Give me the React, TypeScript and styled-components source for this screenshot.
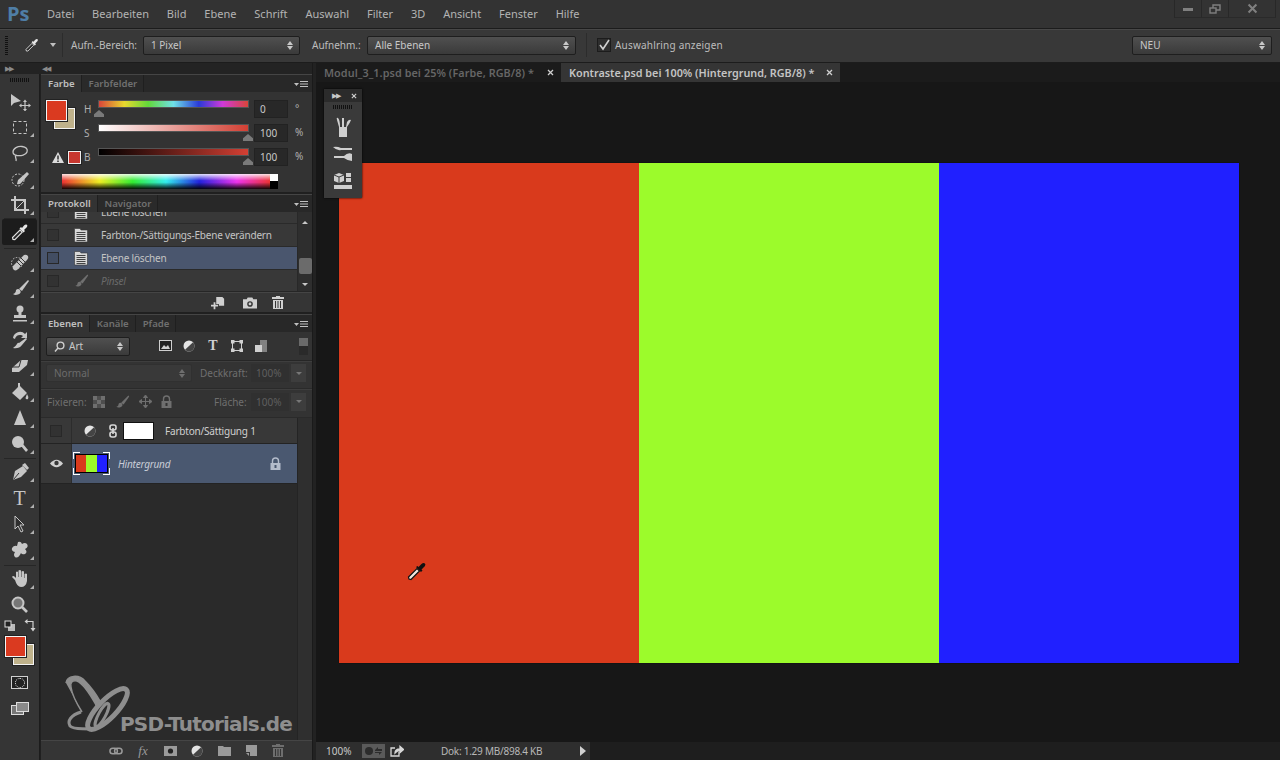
import React from 'react';
import styled, { createGlobalStyle } from 'styled-components';

const GlobalStyle = createGlobalStyle`
  html, body { margin: 0; padding: 0; background: #161616; overflow: hidden; }
  * { box-sizing: border-box; }
`;

const Shell = styled.div`
  width: 1280px;
  height: 760px;
  display: flex;
  flex-direction: column;
  overflow: hidden;
  font-family: "Noto Sans", "Liberation Sans", sans-serif;
  font-size: 10px;
  color: #c4c4c4;
  background: #161616;
`;

/* menu */
const MenuBar = styled.div`
  height: 29px;
  flex: none;
  display: flex;
  align-items: flex-start;
  background: #333333;
  border-bottom: 1px solid #1c1c1c;
`;
const Logo = styled.div`
  width: 47px;
  padding: 1px 0 0 7px;
  font: bold 20px/26px "Open Sans", sans-serif;
  color: #4f7ea6;
`;
const MenuItems = styled.div`
  display: flex;
  gap: 17.9px;
  padding-top: 6px;
  font-size: 11px;
  line-height: 15px;
  color: #b4b4b4;
`;
const WindowButtons = styled.div`
  margin-left: auto;
  margin-right: 4px;
  height: 18px;
  display: flex;
  color: #808080;
  border-left: 1px solid #282828;
`;
const WindowButton = styled.div<{ $w: number }>`
  width: ${({ $w }) => $w}px;
  height: 18px;
  display: flex;
  align-items: center;
  justify-content: center;
  border-right: 1px solid #282828;
  border-bottom: 1px solid #2a2a2a;
`;

/* options */
const OptionsBar = styled.div`
  height: 34px;
  flex: none;
  display: flex;
  align-items: center;
  padding-bottom: 2px;
  background: #383838;
  border-top: 1px solid #484848;
  border-bottom: 1px solid #1c1c1c;
  color: #bdbdbd;
`;
const Grip = styled.div`
  width: 3px;
  height: 19px;
  margin-left: 5px;
  background: repeating-linear-gradient(#111 0 1px, transparent 1px 2px);
`;
const OptionIcon = styled.div`
  width: 18px;
  margin-left: 16px;
  display: flex;
  color: #e0e0e0;
`;
const Caret = styled.div`
  margin-left: 8px;
  width: 0;
  height: 0;
  border: 3px solid transparent;
  border-top: 4px solid #c0c0c0;
  border-bottom: 0;
`;
const VSep = styled.div<{ $left: number; $right: number }>`
  width: 1px;
  height: 24px;
  margin: 0 ${({ $right }) => $right}px 0 ${({ $left }) => $left}px;
  background: #2c2c2c;
`;
const SelectBox = styled.div<{ $w: number; $h?: number; $disabled?: boolean }>`
  width: ${({ $w }) => $w}px;
  height: ${({ $h }) => $h ?? 19}px;
  flex: none;
  display: flex;
  align-items: center;
  padding: 0 6px 0 7px;
  color: ${({ $disabled }) => ($disabled ? '#6c6c6c' : '#c8c8c8')};
  background: ${({ $disabled }) => ($disabled ? '#393939' : 'linear-gradient(#505050, #3a3a3a)')};
  border: 1px solid ${({ $disabled }) => ($disabled ? '#303030' : '#1e1e1e')};
  border-radius: 2px;
`;
const SearchGlyph = styled.svg`
  margin-right: 4px;
`;
const Spinner = styled.span<{ $dim?: boolean }>`
  margin-left: auto;
  display: flex;
  flex-direction: column;
  gap: 1px;
  &::before, &::after {
    content: '';
    border: 3px solid transparent;
    border-top: 0;
    border-bottom: 4px solid ${({ $dim }) => ($dim ? '#6e6e6e' : '#c8c8c8')};
  }
  &::after {
    border-bottom: 0;
    border-top: 4px solid ${({ $dim }) => ($dim ? '#6e6e6e' : '#c8c8c8')};
  }
`;
const OptionLabel = styled.div<{ $left: number; $w: number }>`
  width: ${({ $w }) => $w}px;
  flex: none;
  margin-left: ${({ $left }) => $left}px;
  white-space: nowrap;
`;
const CheckBox = styled.div`
  width: 14px;
  height: 14px;
  margin-right: 4px;
  display: flex;
  color: #d0d0d0;
  background: #2e2e2e;
  border: 1px solid #1c1c1c;
`;
const CheckLabel = styled.div`
  letter-spacing: 0.2px;
`;
const RightSelect = styled.div`
  margin-left: auto;
  margin-right: 8px;
`;

/* body */
const Workspace = styled.div`
  flex: 1;
  min-height: 0;
  display: flex;
`;
const DockColumn = styled.div`
  width: 312px;
  flex: none;
  display: flex;
  flex-direction: column;
  background: #202020;
`;
const CollapseStrip = styled.div`
  height: 11px;
  flex: none;
  display: flex;
  align-items: center;
  justify-content: space-between;
  padding: 0 262px 0 5px;
  background: #232323;
  color: #8a8a8a;
  font-size: 7px;
  letter-spacing: -1px;
`;
const DockBody = styled.div`
  flex: 1;
  min-height: 0;
  display: flex;
  gap: 1px;
`;
const ToolColumn = styled.div`
  width: 40px;
  flex: none;
  display: flex;
  flex-direction: column;
  align-items: center;
  background: #353535;
  border-right: 1px solid #1c1c1c;
`;
const ToolGrip = styled.div`
  width: 20px;
  height: 4px;
  margin: 4px 0 6px;
  background: repeating-linear-gradient(90deg, #111 0 1px, transparent 1px 2px);
`;
const ToolButton = styled.div<{ $active?: boolean; $corner?: boolean }>`
  position: relative;
  width: 35px;
  height: 26px;
  flex: none;
  display: flex;
  align-items: center;
  justify-content: center;
  color: #c6c6c6;
  background: ${({ $active }) => ($active ? '#1c1c1c' : 'transparent')};
  border-radius: 2px;
  &::after {
    content: '';
    display: ${({ $corner }) => ($corner ? 'block' : 'none')};
    position: absolute;
    right: 3px;
    bottom: 3px;
    border: 2px solid transparent;
    border-right-color: #b0b0b0;
    border-bottom-color: #b0b0b0;
  }
`;
const TypeGlyph = styled.span`
  font: 20px "Liberation Serif", serif;
`;
const ToolSep = styled.div<{ $h: number }>`
  width: 32px;
  height: ${({ $h }) => $h}px;
  flex: none;
  border-bottom: 1px solid #262626;
`;
const SwapRow = styled.div`
  width: 32px;
  height: 14px;
  margin-bottom: 4px;
  display: flex;
  justify-content: space-between;
  align-items: center;
  color: #d0d0d0;
`;
const SwatchPair = styled.div`
  position: relative;
  width: 29px;
  height: 29px;
  flex: none;
  &::before, &::after {
    content: '';
    position: absolute;
    width: 19px;
    height: 19px;
    border: 1px solid #f4f4f4;
    outline: 1px solid #222;
  }
  &::before {
    right: 0;
    bottom: 0;
    background: #bfb28b;
  }
  &::after {
    left: 0;
    top: 0;
    background: #da3a20;
  }
`;
const MaskButton = styled.div`
  margin-top: 11px;
  width: 17px;
  height: 13px;
  display: flex;
  align-items: center;
  justify-content: center;
  background: #222;
  border: 1px solid #d0d0d0;
  &::after {
    content: '';
    width: 8px;
    height: 8px;
    border-radius: 50%;
    border: 1px dotted #eee;
  }
`;
const ScreenButton = styled.div`
  margin-top: 13px;
  color: #bbb;
  display: flex;
`;

const PanelColumn = styled.div`
  flex: 1;
  min-width: 0;
  display: flex;
  flex-direction: column;
  gap: 2px;
`;
const Panel = styled.div<{ $h?: number; $grow?: boolean }>`
  height: ${({ $h }) => ($h ? `${$h}px` : 'auto')};
  flex: ${({ $grow }) => ($grow ? '1' : 'none')};
  min-height: 0;
  display: flex;
  flex-direction: column;
  background: #333333;
  border-top: 1px solid #454545;
`;
const TabBar = styled.div`
  height: 17px;
  flex: none;
  display: flex;
  align-items: stretch;
  background: #282828;
  font-size: 9.6px;
  font-weight: 600;
`;
const Tab = styled.div<{ $active?: boolean }>`
  padding: 0 6px 0 7px;
  display: flex;
  align-items: center;
  color: ${({ $active }) => ($active ? '#c0c0c0' : '#707070')};
  background: ${({ $active }) => ($active ? '#333333' : '#2a2a2a')};
  border-right: 1px solid #1f1f1f;
`;
const PanelMenu = styled.div`
  margin: 0 4px 0 auto;
  align-self: center;
  display: flex;
  color: #c0c0c0;
`;

/* colour panel */
const ColorBody = styled.div`
  flex: 1;
  display: grid;
  grid-template-columns: 38px 1fr;
  padding: 8px 0 0 5px;
`;
const ColorLeft = styled.div`
  display: flex;
  flex-direction: column;
  justify-content: space-between;
  height: 64px;
`;
const WarningRow = styled.div`
  display: flex;
  align-items: center;
  gap: 4px;
  padding-left: 6px;
  color: #dcdcdc;
`;
const MiniSwatch = styled.div`
  width: 13px;
  height: 13px;
  background: #c8372f;
  border: 1px solid #eee;
  outline: 1px solid #222;
`;
const SliderRows = styled.div`
  display: flex;
  flex-direction: column;
  gap: 6px;
`;
const SliderRow = styled.div`
  height: 18px;
  display: flex;
  align-items: flex-start;
`;
const SliderLabel = styled.div`
  width: 15px;
  padding-top: 2px;
  line-height: 14px;
  color: #b0b0b0;
`;
const SliderWrap = styled.div`
  position: relative;
  width: 149px;
  height: 6px;
  margin-top: 1px;
`;
const SliderTrack = styled.div<{ $bg: string }>`
  height: 6px;
  background: ${({ $bg }) => $bg};
  outline: 1px solid #555;
`;
const Thumb = styled.div<{ $pos: number }>`
  position: absolute;
  top: 9px;
  left: ${({ $pos }) => $pos}%;
  margin-left: -5px;
  width: 10px;
  height: 7px;
  background: #7a7a7a;
  clip-path: polygon(50% 0, 100% 60%, 100% 100%, 0 100%, 0 60%);
`;
const ValueBox = styled.div`
  width: 34px;
  height: 18px;
  margin-left: 6px;
  padding-left: 5px;
  line-height: 17px;
  color: #c8c8c8;
  background: #282828;
  border: 1px solid #222;
`;
const Unit = styled.div`
  margin-left: 4px;
  padding-left: 3px;
  color: #b0b0b0;
  line-height: 16px;
`;
const Spectrum = styled.div`
  display: flex;
  height: 15px;
  margin: 4px 0 0 -22px;
  width: 216px;
`;
const SpectrumRamp = styled.div`
  flex: 1;
  background:
    linear-gradient(#ffffffdd, #ffffff00 45%, #00000000 55%, #000000ee),
    linear-gradient(90deg, #e33 0%, #ee2 18%, #3e3 34%, #3ee 50%, #22d 66%, #e3e 84%, #e33 100%);
`;
const SpectrumEnd = styled.div`
  width: 8px;
  background: linear-gradient(#fff 50%, #000 50%);
`;

/* history panel */
const HistoryBody = styled.div`
  flex: 1;
  min-height: 0;
  overflow: hidden;
  display: flex;
  border-bottom: 1px solid #262626;
`;
const HistoryList = styled.div`
  flex: 1;
  min-width: 0;
  display: flex;
  flex-direction: column;
  overflow: hidden;
`;
const HistoryRow = styled.div<{ $selected?: boolean; $clip?: boolean; $dim?: boolean }>`
  height: 23px;
  margin-top: ${({ $clip }) => ($clip ? -11 : 0)}px;
  flex: none;
  display: flex;
  align-items: center;
  padding-left: 6px;
  letter-spacing: -0.2px;
  color: ${({ $dim }) => ($dim ? '#6a6a6a' : '#c4c4c4')};
  font-style: ${({ $dim }) => ($dim ? 'italic' : 'normal')};
  background: ${({ $selected }) => ($selected ? '#4a566e' : '#383838')};
  border-bottom: 1px solid #2a2a2a;
`;
const RowCheck = styled.div`
  width: 12px;
  height: 12px;
  flex: none;
  background: rgba(0, 0, 0, 0.1);
  border: 1px solid #282828;
`;
const RowIcon = styled.div<{ $dim?: boolean }>`
  width: 16px;
  margin-left: 14px;
  margin-right: 12px;
  flex: none;
  display: flex;
  color: ${({ $dim }) => ($dim ? '#707070' : '#d8d8d8')};
`;
const ScrollBar = styled.div`
  width: 15px;
  flex: none;
  display: flex;
  flex-direction: column;
  align-items: center;
  padding-top: 9px;
  background: #2e2e2e;
  border-left: 1px solid #282828;
`;
const ArrowUp = styled.div`
  border: 3px solid transparent;
  border-top: 0;
  border-bottom: 3px solid #c8c8c8;
`;
const ArrowDown = styled(ArrowUp)`
  border-bottom: 0;
  border-top: 3px solid #c8c8c8;
  margin-top: 9px;
`;
const ScrollThumb = styled.div`
  width: 13px;
  height: 16px;
  margin-top: 34px;
  background: #6b6b6b;
  border-radius: 2px;
`;
const PanelFooter = styled.div<{ $dim?: boolean }>`
  height: 20px;
  flex: none;
  position: relative;
  display: flex;
  align-items: center;
  color: ${({ $dim }) => ($dim ? '#9a9a9a' : '#d0d0d0')};
  background: #353535;
  border-top: 1px solid #454545;
`;
const FooterIcon = styled.div<{ $left: number; $dim?: boolean }>`
  margin-left: ${({ $left }) => $left}px;
  display: flex;
  width: 14px;
  justify-content: center;
  color: ${({ $dim }) => ($dim ? '#6e6e6e' : 'inherit')};
`;
const FxText = styled.span`
  font: italic 13px "Liberation Serif", serif;
`;
const ResizeGrip = styled.div`
  position: absolute;
  right: 1px;
  bottom: 1px;
  width: 9px;
  height: 9px;
  background: radial-gradient(#777 35%, transparent 40%) 0 0 / 2px 2px;
  clip-path: polygon(100% 0, 100% 100%, 0 100%);
`;

/* layers panel */
const FilterRow = styled.div`
  height: 29px;
  flex: none;
  display: flex;
  align-items: center;
  padding-left: 5px;
  border-bottom: 1px solid #262626;
`;
const FilterIcons = styled.div`
  display: flex;
  margin-left: 28px;
  gap: 10px;
  color: #d0d0d0;
`;
const FilterIcon = styled.div`
  width: 14px;
  display: flex;
  justify-content: center;
`;
const FilterType = styled.span`
  font: bold 14px/12px "Liberation Serif", serif;
`;
const ToggleSwitch = styled.div`
  width: 9px;
  height: 17px;
  margin-left: 31px;
  background: linear-gradient(#6a6a6a 50%, #2a2a2a 50%);
`;
const DisabledRow = styled.div<{ $h: number; $pad: number }>`
  height: ${({ $h }) => $h}px;
  flex: none;
  display: flex;
  align-items: center;
  padding: 0 0 ${({ $pad }) => $pad}px 5px;
  color: #6f6f6f;
  border-bottom: 1px solid #2a2a2a;
  border-top: 1px solid #3e3e3e;
`;
const MutedLabel = styled.div<{ $left: number; $w: number }>`
  width: ${({ $w }) => $w}px;
  flex: none;
  margin-left: ${({ $left }) => $left}px;
  white-space: nowrap;
  color: #6f6f6f;
`;
const PercentBox = styled.div`
  width: 38px;
  height: 18px;
  padding-left: 5px;
  line-height: 18px;
  color: #5f5f5f;
  background: #303030;
`;
const Stepper = styled.div`
  width: 15px;
  height: 18px;
  margin-left: 2px;
  display: flex;
  align-items: center;
  justify-content: center;
  background: #3d3d3d;
  &::after {
    content: '';
    border: 3px solid transparent;
    border-top: 3px solid #777;
    border-bottom: 0;
  }
`;
const LockIcons = styled.div`
  display: flex;
  align-items: center;
  gap: 9px;
  margin-left: 9px;
  color: #6f6f6f;
`;
const LayersBody = styled.div`
  position: relative;
  flex: 1;
  min-height: 0;
  display: flex;
  background: #2a2a2a;
`;
const LayerList = styled.div`
  flex: 1;
  min-width: 0;
`;
const LayerRow = styled.div<{ $h: number }>`
  height: ${({ $h }) => $h}px;
  display: flex;
  background: #383838;
  border-bottom: 1px solid #232323;
`;
const EyeCell = styled.div`
  width: 31px;
  flex: none;
  display: flex;
  align-items: center;
  justify-content: center;
  color: #d0d0d0;
  border-right: 1px solid #2c2c2c;
`;
const LayerContent = styled.div<{ $selected?: boolean }>`
  flex: 1;
  display: flex;
  align-items: center;
  letter-spacing: -0.2px;
  color: ${({ $selected }) => ($selected ? '#c8ccd6' : '#d0d0d0')};
  background: ${({ $selected }) => ($selected ? '#4a5870' : 'transparent')};
`;
const AdjustIcon = styled.div`
  width: 12px;
  margin-left: 12px;
  display: flex;
  color: #d8d8d8;
`;
const LinkIcon = styled.div`
  width: 8px;
  margin-left: 13px;
  display: flex;
  color: #d8d8d8;
`;
const MaskThumb = styled.div`
  width: 31px;
  height: 18px;
  margin-left: 6px;
  background: #fff;
  border: 1px solid #111;
`;
const LayerName = styled.div<{ $left: number; $italic?: boolean }>`
  margin-left: ${({ $left }) => $left}px;
  font-style: ${({ $italic }) => ($italic ? 'italic' : 'normal')};
`;
const ImageThumb = styled.div`
  position: relative;
  width: 33px;
  height: 19px;
  margin-left: 3px;
  display: flex;
  border: 1px solid #000;
  &::before {
    content: '';
    position: absolute;
    inset: -3px;
    background:
      linear-gradient(#fff, #fff) 0 0 / 7px 1px,
      linear-gradient(#fff, #fff) 0 0 / 1px 7px,
      linear-gradient(#fff, #fff) 100% 0 / 7px 1px,
      linear-gradient(#fff, #fff) 100% 0 / 1px 7px,
      linear-gradient(#fff, #fff) 0 100% / 7px 1px,
      linear-gradient(#fff, #fff) 0 100% / 1px 7px,
      linear-gradient(#fff, #fff) 100% 100% / 7px 1px,
      linear-gradient(#fff, #fff) 100% 100% / 1px 7px;
    background-repeat: no-repeat;
  }
`;
const ThumbStripe = styled.div<{ $c: string }>`
  flex: 1;
  background: ${({ $c }) => $c};
`;
const LayerLock = styled.div`
  margin-left: auto;
  margin-right: 16px;
  display: flex;
  color: #b4bccb;
`;
const LayerScroll = styled.div`
  width: 15px;
  flex: none;
  background: #2f2f2f;
  border-left: 1px solid #242424;
`;
const Watermark = styled.div`
  position: absolute;
  left: 23px;
  bottom: 6px;
  display: flex;
  align-items: flex-end;
  color: #8e8e8e;
`;
const WatermarkText = styled.div`
  margin: 0 0 -2px -10px;
  font: bold 20px/24px "DejaVu Sans", sans-serif;
  letter-spacing: -0.8px;
  white-space: nowrap;
`;

/* document area */
const DocGutter = styled.div`
  width: 4px;
  flex: none;
  background: #222222;
  border-left: 1px solid #1a1a1a;
`;
const DocArea = styled.div`
  position: relative;
  flex: 1;
  min-width: 0;
  display: flex;
  flex-direction: column;
  background: #171717;
`;
const DocTabs = styled.div`
  height: 19px;
  flex: none;
  display: flex;
  background: #1b1b1b;
  font-size: 10.8px;
  font-weight: 600;
`;
const DocTab = styled.div<{ $active?: boolean; $w: number }>`
  width: ${({ $w }) => $w}px;
  display: flex;
  align-items: center;
  justify-content: space-between;
  padding: 0 7px 0 8px;
  white-space: nowrap;
  letter-spacing: ${({ $active }) => ($active ? 0 : 0.08)}px;
  color: ${({ $active }) => ($active ? '#c4c4c4' : '#666666')};
  background: ${({ $active }) => ($active ? '#353535' : 'transparent')};
`;
const TabClose = styled.span`
  display: flex;
  color: #cfcfcf;
`;
const Viewport = styled.div`
  flex: 1;
  min-height: 0;
  padding: 81px 0 0 23px;
  background: #171717;
`;
const Picture = styled.div`
  width: 900px;
  height: 500px;
  display: flex;
  box-shadow: 0 0 1px #000;
`;
const PictureBand = styled.div<{ $c: string; $w: number }>`
  width: ${({ $w }) => $w}px;
  background: ${({ $c }) => $c};
`;
const StatusBar = styled.div`
  height: 18px;
  flex: none;
  display: flex;
  align-items: center;
  background: #1e1e1e;
`;
const StatusGroup = styled.div`
  width: 274px;
  height: 18px;
  display: flex;
  align-items: center;
  background: #2e2e2e;
  color: #b8b8b8;
  & > * {
    flex: none;
  }
`;
const ZoomText = styled.div`
  width: 46px;
  padding-left: 10px;
  color: #c8c8c8;
`;
const StatusChip = styled.div`
  width: 23px;
  height: 14px;
  display: flex;
  align-items: center;
  justify-content: center;
  color: #2c2c2c;
  background: #5a5a5a;
`;
const ShareIcon = styled.div`
  margin-left: 5px;
  display: flex;
  color: #d8d8d8;
`;
const DocInfo = styled.div`
  margin-left: 37px;
  white-space: nowrap;
  letter-spacing: -0.25px;
`;
const PlayArrow = styled.div`
  margin-left: 38px;
  border: 5px solid transparent;
  border-left: 6px solid #d0d0d0;
  border-right: 0;
`;
const FloatPanel = styled.div`
  position: absolute;
  left: 8px;
  top: 26px;
  width: 38px;
  height: 109px;
  display: flex;
  flex-direction: column;
  align-items: center;
  background: #3a3a3a;
  box-shadow: 0 0 2px #000;
`;
const FloatHeader = styled.div`
  width: 100%;
  height: 13px;
  display: flex;
  align-items: center;
  justify-content: space-between;
  padding: 0 5px 0 8px;
  background: #2b2b2b;
  color: #c8c8c8;
  font-size: 7px;
  letter-spacing: -1px;
`;
const FloatGrip = styled.div`
  width: 20px;
  height: 4px;
  margin: 3px 0 4px;
  background: repeating-linear-gradient(90deg, #111 0 1px, transparent 1px 2px);
`;
const FloatIcon = styled.div`
  height: 27px;
  display: flex;
  align-items: center;
  color: #cfcfcf;
`;
const Cursor = styled.div`
  position: absolute;
  left: 90px;
  top: 497px;
  display: flex;
`;

type IconProps = { s?: number };
const Ico: React.FC<React.PropsWithChildren<{ w?: number; h?: number }>> = ({ w = 20, h = 20, children }) => (
  <svg width={w} height={h} viewBox={`0 0 ${w} ${h}`} fill="currentColor">
    {children}
  </svg>
);

const DropperGlyph = ({ s = 20 }: IconProps) => (
  <svg width={s} height={s} viewBox="0 0 20 20">
    <path d="M3 17.5 L2.5 15.5 L10 8 L12.2 10.2 L4.8 17.6 Z" fill="#2a2a2a" stroke="#e2e2e2" strokeWidth="1.1" />
    <path d="M9.5 6.5 L13.5 10.5 L15 9 L14 8 L17 5 Q18 3 16.5 2.5 Q15.5 2 14 3.5 L12 6 L11 5 Z" fill="#e6e6e6" />
  </svg>
);

const icons: Record<string, React.ReactNode> = {
  move: (
    <Ico w={28}>
      <path d="M5 3 L5 15 L8 12 L15 10 Z" />
      <path d="M19 10 v9 M14.5 14.5 h9" stroke="currentColor" strokeWidth="1.2" fill="none" />
      <path d="M19 8.5 l2 2.5 h-4 Z M19 20.5 l2 -2.5 h-4 Z M13 14.5 l2.5 -2 v4 Z M25 14.5 l-2.5 -2 v4 Z" />
    </Ico>
  ),
  marquee: (
    <Ico>
      <rect x="3.5" y="4.5" width="13" height="12" fill="none" stroke="currentColor" strokeDasharray="3 2" />
    </Ico>
  ),
  lasso: (
    <Ico>
      <path d="M3 9 C3 5 8 3 12 3.5 C16 4 18 6 17 9 C16 12 11 13 7 12.5 C4 12 3 11 3 9 Z M6 12 C4 14 7 15 6 18" fill="none" stroke="currentColor" strokeWidth="1.3" />
    </Ico>
  ),
  quick: (
    <Ico>
      <circle cx="8" cy="11" r="6" fill="none" stroke="currentColor" strokeDasharray="2 1.5" />
      <path d="M8 11 L17 3 L19 5 L12 13 Q10 16 7 15 Z" />
    </Ico>
  ),
  crop: (
    <Ico>
      <path d="M5 1 V15 H19 M1 5 H15 V19" fill="none" stroke="currentColor" strokeWidth="2" />
      <path d="M5 15 L15 5" stroke="currentColor" />
    </Ico>
  ),
  dropper: <DropperGlyph />,
  heal: (
    <Ico>
      <circle cx="7" cy="11" r="5.5" fill="none" stroke="currentColor" strokeDasharray="1.5 1.5" />
      <path d="M3 14 L14 3 Q16 2 18 4 Q19 6 17 8 L7 18 Q5 19 3.5 17.5 Q2 16 3 14 Z" />
      <path d="M7 10 L11 14 M9 8 L13 12 M11 6 L15 10" stroke="#353535" />
    </Ico>
  ),
  brush: (
    <Ico>
      <path d="M9 11 L18 2 L19 3 L12 13 Z" />
      <path d="M3 16 Q6 15 6 12 Q8 10 10 12 Q12 15 8 16.5 Q5 17.5 3 16 Z" />
    </Ico>
  ),
  stamp: (
    <Ico>
      <circle cx="10" cy="5" r="3.5" />
      <path d="M8.5 8 h3 v3 h4.5 v3 H4 v-3 h4.5 Z M3 16 h14 v1.6 H3 Z" />
    </Ico>
  ),
  history: (
    <Ico>
      <path d="M3 8 A7 7 0 0 1 15 4 L17 2 V8 H11 L13 6 A5 5 0 0 0 5 9 Z" />
      <path d="M9 13 L16 8 L17 9 L12 15 Q9 19 3 18 Q6 16 7 14 Q8 12 9 13 Z" />
    </Ico>
  ),
  eraser: (
    <Ico>
      <path d="M2 12 L11 4 H18 L17 9 L9 16 H2 Z" />
      <path d="M11 4 L9 11 H2" stroke="#353535" fill="none" />
    </Ico>
  ),
  bucket: (
    <Ico>
      <path d="M8 1 h2 v3 l7 7 -7 7 -8 -7 6 -6 Z" />
      <path d="M17 12 Q19 15 18 17 Q16 18 15.5 16 Z" />
    </Ico>
  ),
  gradient: (
    <Ico>
      <path d="M10 2 L16 17 H4 Z" />
    </Ico>
  ),
  dodge: (
    <Ico>
      <circle cx="8" cy="8" r="6" />
      <path d="M11 12 L13 10 L18 16 L16 18 Z" />
    </Ico>
  ),
  pen: (
    <Ico>
      <path d="M3 18 L5 9 L13 4 L17 9 L11 15 Z" />
      <path d="M12 3 L15 1 L19 6 L17 8 Z" />
      <path d="M3.5 17.5 L9 11" stroke="#353535" fill="none" />
    </Ico>
  ),
  arrow: (
    <Ico>
      <path d="M5 2 V15 L8 12 L11 18 L13 17 L10 11 H14 Z" fill="#2e2e2e" stroke="currentColor" />
    </Ico>
  ),
  shape: (
    <Ico>
      <path d="M8 2 Q11 1 12 4 Q15 2 17 4 Q19 7 15 9 Q18 12 15 14 Q12 15 11 13 Q8 19 5 17 Q3 15 5 12 Q1 11 2 8 Q4 5 7 6 Z" />
    </Ico>
  ),
  hand: (
    <Ico>
      <path d="M5 11 L2 8 Q3 6 5 8 L6 9 V3 Q7 2 8 3 V8 h.5 V1.5 Q10 .5 11 1.5 V8 h.5 V2.5 Q13 1.5 14 2.5 V9 h.5 V5 Q16 4 17 5 V12 Q16 18 11 18 Q7 18 5 11 Z" />
    </Ico>
  ),
  zoom: (
    <Ico>
      <circle cx="8" cy="8" r="5.5" fill="#777" stroke="currentColor" strokeWidth="2" />
      <path d="M12 12 L17 17" stroke="currentColor" strokeWidth="2.6" />
    </Ico>
  ),
};

const ClosePlain = ({ s = 7 }: IconProps) => (
  <svg width={s} height={s} viewBox="0 0 7 7">
    <path d="M1 1 L6 6 M6 1 L1 6" stroke="currentColor" strokeWidth="1.3" />
  </svg>
);
const MenuGlyph = () => (
  <svg width="14" height="8" viewBox="0 0 14 8" fill="currentColor">
    <path d="M0 3 H5 L2.5 6 Z" />
    <path d="M6 1 h8 v1 h-8 Z M6 3.5 h8 v1 h-8 Z M6 6 h8 v1 h-8 Z" />
  </svg>
);
const DocGlyph = ({ s = 16 }: IconProps) => (
  <svg width={s} height={s} viewBox="0 0 16 16">
    <path d="M1.5 1.5 H7 L8 3 H14.5 V15 H1.5 Z" fill="#d8d8d8" stroke="#333" strokeWidth=".6" />
    <path d="M3.5 5.5 h9 M3.5 7.5 h9 M3.5 9.5 h9 M3.5 11.5 h9 M3.5 13.5 h9" stroke="#444" strokeWidth="1" />
  </svg>
);
const TrashGlyph = () => (
  <svg width="12" height="13" viewBox="0 0 12 13" fill="currentColor">
    <path d="M4 0 h4 v1 h4 v2 H0 V1 h4 Z M1 4 h10 v9 H1 Z" />
    <path d="M3.5 5 v7 M6 5 v7 M8.5 5 v7" stroke="#353535" />
  </svg>
);
const LockGlyph = ({ stroke }: { stroke: string }) => (
  <svg width="11" height="13" viewBox="0 0 11 13" fill="currentColor">
    <path d="M2.5 6 V4 a3 3 0 0 1 6 0 V6" fill="none" stroke="currentColor" strokeWidth="1.4" />
    <rect x="0.5" y="6" width="10" height="7" />
    <rect x="4.5" y="8" width="2" height="3" fill={stroke} />
  </svg>
);
const AdjustGlyph = () => (
  <svg width="12" height="12" viewBox="0 0 12 12">
    <circle cx="6" cy="6" r="5.5" fill="#e4e4e4" />
    <path d="M10 2.2 A5.5 5.5 0 0 1 2 9.8 Z" fill="#444" />
  </svg>
);
const EyeGlyph = () => (
  <svg width="13" height="9" viewBox="0 0 13 9">
    <path d="M0 4.5 Q6.5 -3 13 4.5 Q6.5 12 0 4.5 Z" fill="currentColor" />
    <circle cx="6.5" cy="4" r="2.2" fill="#383838" />
  </svg>
);
const BrushSmall = () => (
  <svg width="16" height="16" viewBox="0 0 20 20" fill="currentColor">
    <path d="M9 11 L18 2 L19 3 L12 13 Z M3 16 Q6 15 6 12 Q8 10 10 12 Q12 15 8 16.5 Q5 17.5 3 16 Z" />
  </svg>
);
const SwapGlyph = () => (
  <svg width="12" height="13" viewBox="0 0 12 13" fill="none" stroke="currentColor" strokeWidth="1.2">
    <path d="M3 2.5 H9 V10" />
    <path d="M0.5 2.5 L3.5 0 V5 Z M6.5 9 H11.5 L9 12.5 Z" fill="currentColor" stroke="none" />
  </svg>
);
const ButterflyLogo = () => (
  <svg width="66" height="60" viewBox="0 0 66 60" fill="none" stroke="currentColor">
    <path d="M2 9 C3 1 15 0 21 7 C27 13 32 20 36 27 L32 31 C26 20 20 10 13 7 C8 6 6 9 7 13 C8 22 13 30 18 38" strokeWidth="1.5" fill="currentColor" />
    <path d="M17 38 C7 41 3 47 6 52 C10 56 18 54 26 55" strokeWidth="3" />
    <ellipse cx="43.5" cy="35" rx="27" ry="9" transform="rotate(-46 43.5 35)" strokeWidth="5" />
    <ellipse cx="38" cy="41" rx="13" ry="3.5" transform="rotate(-62 38 41)" strokeWidth="3" />
  </svg>
);

const toolsTop = ['move', 'marquee', 'lasso', 'quick', 'crop'];
const toolsPaint = ['heal', 'brush', 'stamp', 'history', 'eraser', 'bucket', 'gradient', 'dodge'];
const menu = ['Datei', 'Bearbeiten', 'Bild', 'Ebene', 'Schrift', 'Auswahl', 'Filter', '3D', 'Ansicht', 'Fenster', 'Hilfe'];

const sliders = [
  { label: 'H', bg: 'linear-gradient(90deg,#d8453a,#e8d82e 17%,#63d83a 33%,#6fe0e8 50%,#2a3ad8 67%,#d03ad8 83%,#d8453a)', pos: 0, value: '0', unit: '°' },
  { label: 'S', bg: 'linear-gradient(90deg,#fff,#d23f33)', pos: 100, value: '100', unit: '%' },
  { label: 'B', bg: 'linear-gradient(90deg,#000,#d23f33)', pos: 100, value: '100', unit: '%' },
];

const footerIcons: { left: number; node: React.ReactNode }[] = [
  {
    left: 170,
    node: (
      <svg width="16" height="14" viewBox="0 0 16 14" fill="currentColor">
        <path d="M6 0 h7 l2 2 v8 H9 v-2 H6 Z M0 9 h3 V6 h2 v3 h3 v2 H5 v3 H3 v-3 H0 Z" />
      </svg>
    ),
  },
  {
    left: 18,
    node: (
      <svg width="15" height="12" viewBox="0 0 15 12" fill="currentColor">
        <path d="M0 2 h4 l1 -2 h5 l1 2 h4 v10 H0 Z" />
        <circle cx="7.5" cy="7" r="3" fill="#353535" />
        <circle cx="7.5" cy="7" r="1.5" />
      </svg>
    ),
  },
  { left: 14, node: <TrashGlyph /> },
];

const layerFooter: React.ReactNode[] = [
  <svg key="link" width="15" height="8" viewBox="0 0 15 8" fill="none" stroke="currentColor" strokeWidth="1.6"><rect x="1" y="1" width="8" height="6" rx="3" /><rect x="6" y="1" width="8" height="6" rx="3" /></svg>,
  <FxText key="fx">fx</FxText>,
  <svg key="mask" width="13" height="10" viewBox="0 0 13 10"><rect width="13" height="10" fill="currentColor" /><circle cx="6.5" cy="5" r="2.6" fill="#222" /></svg>,
  <AdjustGlyph key="adj" />,
  <svg key="folder" width="13" height="10" viewBox="0 0 13 10" fill="currentColor"><path d="M0 0 h5 l1 1 h7 v9 H0 Z" /></svg>,
  <svg key="new" width="11" height="11" viewBox="0 0 11 11" fill="currentColor"><path d="M0 0 h11 v11 H4 V7 H0 Z" /><path d="M0 8 h3 v3 Z" /></svg>,
  <TrashGlyph key="trash" />,
];

const App: React.FC = () => (
  <Shell>
    <GlobalStyle />
    <MenuBar>
      <Logo>Ps</Logo>
      <MenuItems>
        {menu.map((m) => (
          <div key={m}>{m}</div>
        ))}
      </MenuItems>
      <WindowButtons>
        <WindowButton $w={27}>
          <svg width="10" height="4" viewBox="0 0 10 4" fill="currentColor"><rect width="10" height="3" y="1" /></svg>
        </WindowButton>
        <WindowButton $w={27}>
          <svg width="12" height="10" viewBox="0 0 12 10" fill="none" stroke="currentColor" strokeWidth="1.4"><rect x="1" y="4" width="6" height="5" /><path d="M4 4 V1 H11 V6 H7" /></svg>
        </WindowButton>
        <WindowButton $w={47}>
          <ClosePlain s={11} />
        </WindowButton>
      </WindowButtons>
    </MenuBar>

    <OptionsBar>
      <Grip />
      <OptionIcon>
        <DropperGlyph s={16} />
      </OptionIcon>
      <Caret />
      <VSep $left={6} $right={0} />
      <OptionLabel $left={8} $w={72}>Aufn.-Bereich:</OptionLabel>
      <SelectBox $w={157}>
        1 Pixel
        <Spinner />
      </SelectBox>
      <OptionLabel $left={12} $w={55}>Aufnehm.:</OptionLabel>
      <SelectBox $w={209}>
        Alle Ebenen
        <Spinner />
      </SelectBox>
      <VSep $left={10} $right={10} />
      <CheckBox>
        <svg width="12" height="12" viewBox="0 0 12 12" fill="none" stroke="currentColor" strokeWidth="1.6"><path d="M2 6 L5 10 L11 1" /></svg>
      </CheckBox>
      <CheckLabel>Auswahlring anzeigen</CheckLabel>
      <RightSelect>
        <SelectBox $w={140}>
          NEU
          <Spinner />
        </SelectBox>
      </RightSelect>
    </OptionsBar>

    <Workspace>
      <DockColumn>
        <CollapseStrip>
          <span>▶▶</span>
          <span>◀◀</span>
        </CollapseStrip>
        <DockBody>
          <ToolColumn>
            <ToolGrip />
            {toolsTop.map((t) => (
              <ToolButton key={t} $corner={t !== 'move'}>{icons[t]}</ToolButton>
            ))}
            <ToolSep $h={1} />
            <ToolButton $active $corner>{icons.dropper}</ToolButton>
            <ToolSep $h={4} />
            {toolsPaint.map((t) => (
              <ToolButton key={t} $corner>{icons[t]}</ToolButton>
            ))}
            <ToolSep $h={2} />
            <ToolButton $corner>{icons.pen}</ToolButton>
            <ToolButton $corner>
              <TypeGlyph>T</TypeGlyph>
            </ToolButton>
            <ToolButton $corner>{icons.arrow}</ToolButton>
            <ToolButton $corner>{icons.shape}</ToolButton>
            <ToolSep $h={3} />
            <ToolButton $corner>{icons.hand}</ToolButton>
            <ToolButton>{icons.zoom}</ToolButton>
            <SwapRow>
              <svg width="11" height="11" viewBox="0 0 11 11"><rect x="4" y="4" width="7" height="7" fill="#bbb" /><rect x="1" y="1" width="6" height="6" fill="#222" stroke="#ddd" /></svg>
              <SwapGlyph />
            </SwapRow>
            <SwatchPair />
            <MaskButton />
            <ScreenButton>
              <svg width="18" height="13" viewBox="0 0 18 13"><rect x="0.5" y="3.5" width="12" height="9" fill="#777" stroke="#ddd" /><rect x="5.5" y="0.5" width="12" height="9" fill="#8a8a8a" stroke="#ddd" /></svg>
            </ScreenButton>
          </ToolColumn>

          <PanelColumn>
            <Panel $h={118}>
              <TabBar>
                <Tab $active>Farbe</Tab>
                <Tab>Farbfelder</Tab>
                <PanelMenu><MenuGlyph /></PanelMenu>
              </TabBar>
              <ColorBody>
                <ColorLeft>
                  <SwatchPair />
                  <WarningRow>
                    <svg width="12" height="11" viewBox="0 0 12 11"><path d="M6 0 L12 11 H0 Z" fill="currentColor" /><path d="M6 3.5 V7.5 M6 8.5 V10" stroke="#222" strokeWidth="1.4" /></svg>
                    <MiniSwatch />
                  </WarningRow>
                </ColorLeft>
                <SliderRows>
                  {sliders.map((s) => (
                    <SliderRow key={s.label}>
                      <SliderLabel>{s.label}</SliderLabel>
                      <SliderWrap>
                        <SliderTrack $bg={s.bg} />
                        <Thumb $pos={s.pos} />
                      </SliderWrap>
                      <ValueBox>{s.value}</ValueBox>
                      <Unit>{s.unit}</Unit>
                    </SliderRow>
                  ))}
                </SliderRows>
                <span />
                <Spectrum>
                  <SpectrumRamp />
                  <SpectrumEnd />
                </Spectrum>
              </ColorBody>
            </Panel>

            <Panel $h={118}>
              <TabBar>
                <Tab $active>Protokoll</Tab>
                <Tab>Navigator</Tab>
                <PanelMenu><MenuGlyph /></PanelMenu>
              </TabBar>
              <HistoryBody>
                <HistoryList>
                  <HistoryRow $clip>
                    <RowCheck />
                    <RowIcon><DocGlyph /></RowIcon>
                    Ebene löschen
                  </HistoryRow>
                  <HistoryRow>
                    <RowCheck />
                    <RowIcon><DocGlyph /></RowIcon>
                    Farbton-/Sättigungs-Ebene verändern
                  </HistoryRow>
                  <HistoryRow $selected>
                    <RowCheck />
                    <RowIcon><DocGlyph /></RowIcon>
                    Ebene löschen
                  </HistoryRow>
                  <HistoryRow $dim>
                    <RowCheck />
                    <RowIcon $dim><BrushSmall /></RowIcon>
                    Pinsel
                  </HistoryRow>
                </HistoryList>
                <ScrollBar>
                  <ArrowUp />
                  <ScrollThumb />
                  <ArrowDown />
                </ScrollBar>
              </HistoryBody>
              <PanelFooter>
                {footerIcons.map((f, i) => (
                  <FooterIcon key={i} $left={f.left}>{f.node}</FooterIcon>
                ))}
                <ResizeGrip />
              </PanelFooter>
            </Panel>

            <Panel $grow>
              <TabBar>
                <Tab $active>Ebenen</Tab>
                <Tab>Kanäle</Tab>
                <Tab>Pfade</Tab>
                <PanelMenu><MenuGlyph /></PanelMenu>
              </TabBar>
              <FilterRow>
                <SelectBox $w={84}>
                  <SearchGlyph width="11" height="11" viewBox="0 0 11 11" fill="none" stroke="#d0d0d0" strokeWidth="1.4"><circle cx="6.5" cy="4.5" r="3.4" /><path d="M4 7 L1 10.5" /></SearchGlyph>
                  Art
                  <Spinner />
                </SelectBox>
                <FilterIcons>
                  <FilterIcon>
                    <svg width="13" height="11" viewBox="0 0 13 11"><rect x=".5" y=".5" width="12" height="10" fill="#222" stroke="currentColor" /><path d="M2 9 L5 5 L7 7 L9 5 L11 9 Z" fill="currentColor" /></svg>
                  </FilterIcon>
                  <FilterIcon><AdjustGlyph /></FilterIcon>
                  <FilterIcon>
                    <FilterType>T</FilterType>
                  </FilterIcon>
                  <FilterIcon>
                    <svg width="12" height="12" viewBox="0 0 12 12" fill="none" stroke="currentColor"><rect x="1.5" y="1.5" width="9" height="9" /><rect x="0" y="0" width="3" height="3" fill="currentColor" /><rect x="9" y="0" width="3" height="3" fill="currentColor" /><rect x="0" y="9" width="3" height="3" fill="currentColor" /><rect x="9" y="9" width="3" height="3" fill="currentColor" /></svg>
                  </FilterIcon>
                  <FilterIcon>
                    <svg width="12" height="12" viewBox="0 0 12 12" fill="currentColor"><path d="M5 0 h7 v12 H7 V5 H5 Z" fillOpacity=".5" /><rect y="5" width="7" height="7" /></svg>
                  </FilterIcon>
                </FilterIcons>
                <ToggleSwitch />
              </FilterRow>
              <DisabledRow $h={28} $pad={4}>
                <SelectBox $w={146} $h={18} $disabled>
                  Normal
                  <Spinner $dim />
                </SelectBox>
                <MutedLabel $left={8} $w={51}>Deckkraft:</MutedLabel>
                <PercentBox>100%</PercentBox>
                <Stepper />
              </DisabledRow>
              <DisabledRow $h={29} $pad={4}>
                <MutedLabel $left={1} $w={37}>Fixieren:</MutedLabel>
                <LockIcons>
                  <svg width="12" height="12" viewBox="0 0 12 12" fill="currentColor"><rect width="12" height="12" fillOpacity=".45" /><path d="M0 0 h4 v4 H0 Z M8 0 h4 v4 H8 Z M4 4 h4 v4 H4 Z M0 8 h4 v4 H0 Z M8 8 h4 v4 H8 Z" /></svg>
                  <BrushSmall />
                  <svg width="13" height="13" viewBox="0 0 13 13" fill="none" stroke="currentColor"><path d="M6.5 1 V12 M1 6.5 H12" /><path d="M6.5 0 L8.5 2.5 H4.5 Z M6.5 13 L8.5 10.5 H4.5 Z M0 6.5 L2.5 4.5 V8.5 Z M13 6.5 L10.5 4.5 V8.5 Z" fill="currentColor" /></svg>
                  <LockGlyph stroke="#333" />
                </LockIcons>
                <MutedLabel $left={42} $w={37}>Fläche:</MutedLabel>
                <PercentBox>100%</PercentBox>
                <Stepper />
              </DisabledRow>
              <LayersBody>
                <LayerList>
                  <LayerRow $h={26}>
                    <EyeCell><RowCheck /></EyeCell>
                    <LayerContent>
                      <AdjustIcon><AdjustGlyph /></AdjustIcon>
                      <LinkIcon>
                        <svg width="8" height="14" viewBox="0 0 8 14" fill="none" stroke="currentColor" strokeWidth="1.6"><rect x="1" y="1" width="6" height="5" rx="2" /><rect x="1" y="8" width="6" height="5" rx="2" /><path d="M4 4 V10" /></svg>
                      </LinkIcon>
                      <MaskThumb />
                      <LayerName $left={11}>Farbton/Sättigung 1</LayerName>
                    </LayerContent>
                  </LayerRow>
                  <LayerRow $h={40}>
                    <EyeCell><EyeGlyph /></EyeCell>
                    <LayerContent $selected>
                      <ImageThumb>
                        <ThumbStripe $c="#d93a1c" />
                        <ThumbStripe $c="#9cfb2b" />
                        <ThumbStripe $c="#2020ff" />
                      </ImageThumb>
                      <LayerName $left={10} $italic>Hintergrund</LayerName>
                      <LayerLock><LockGlyph stroke="#4a5870" /></LayerLock>
                    </LayerContent>
                  </LayerRow>
                </LayerList>
                <LayerScroll />
                <Watermark>
                  <ButterflyLogo />
                  <WatermarkText>PSD-Tutorials.de</WatermarkText>
                </Watermark>
              </LayersBody>
              <PanelFooter $dim>
                {layerFooter.map((n, i) => (
                  <FooterIcon key={i} $left={i === 0 ? 68 : 13} $dim={i === 6}>{n}</FooterIcon>
                ))}
              </PanelFooter>
            </Panel>
          </PanelColumn>
        </DockBody>
      </DockColumn>

      <DocGutter />

      <DocArea>
        <DocTabs>
          <DocTab $w={245}>
            Modul_3_1.psd bei 25% (Farbe, RGB/8) *
            <TabClose><ClosePlain /></TabClose>
          </DocTab>
          <DocTab $active $w={279}>
            Kontraste.psd bei 100% (Hintergrund, RGB/8) *
            <TabClose><ClosePlain /></TabClose>
          </DocTab>
        </DocTabs>
        <Viewport>
          <Picture>
            <PictureBand $c="#d93a1c" $w={300} />
            <PictureBand $c="#9cfb2b" $w={300} />
            <PictureBand $c="#2020ff" $w={300} />
          </Picture>
        </Viewport>
        <StatusBar>
          <StatusGroup>
            <ZoomText>100%</ZoomText>
            <StatusChip>
              <svg width="19" height="10" viewBox="0 0 19 10" fill="currentColor"><circle cx="5" cy="5" r="4" /><path d="M11 4 L14 1 L14 3 H18 V5 H11 Z M18 6 L15 9 L15 7 H11 V6 Z" /></svg>
            </StatusChip>
            <ShareIcon>
              <svg width="14" height="12" viewBox="0 0 14 12" fill="none" stroke="currentColor" strokeWidth="1.3"><path d="M9 7 V11 H1 V3 H5" /><path d="M5 8 Q5 4 10 4 V1.5 L13.5 4.5 L10 7.5 V5.5 Q7 5.5 5 8 Z" fill="currentColor" /></svg>
            </ShareIcon>
            <DocInfo>Dok: 1.29 MB/898.4 KB</DocInfo>
            <PlayArrow />
          </StatusGroup>
        </StatusBar>
        <FloatPanel>
          <FloatHeader>
            <span>▶▶</span>
            <TabClose><ClosePlain s={6} /></TabClose>
          </FloatHeader>
          <FloatGrip />
          <FloatIcon>
            <svg width="18" height="20" viewBox="0 0 18 20" fill="currentColor"><path d="M5 10 h8 v10 H5 Z" /><path d="M5 10 L3 3 Q2 0 4 1 Q6 3 6 10 Z M8 10 L8 1 h2 V10 Z M12 10 L13 5 Q15 2 17 3 Q16 6 13 10 Z" /></svg>
          </FloatIcon>
          <FloatIcon>
            <svg width="20" height="16" viewBox="0 0 20 16" fill="currentColor"><path d="M0 1 Q4 0 8 2 H19 V4 H8 Q4 5 0 1 Z" /><path d="M1 10 H11 Q15 6 19 8 V15 Q15 15 11 12 H1 Z" /></svg>
          </FloatIcon>
          <FloatIcon>
            <svg width="18" height="18" viewBox="0 0 18 18" fill="currentColor"><path d="M5 1 L10 3 V9 L5 11 L0 9 V3 Z" /><path d="M5 5 V11 M0 3 L5 5 L10 3" stroke="#3a3a3a" fill="none" /><rect x="12" y="1" width="5" height="4" /><rect x="12" y="6" width="5" height="4" /><rect y="13" width="18" height="4" /></svg>
          </FloatIcon>
        </FloatPanel>
        <Cursor>
          <svg width="22" height="22" viewBox="0 0 22 22">
            <path d="M3 19 L2.5 17 L11 8.5 L13.5 11 L5 19.5 Z" fill="#f0e8e0" stroke="#111" strokeWidth="1.2" />
            <path d="M10 7 L15 12 L16.5 10.5 L15.5 9.5 L19 6 Q20 4 18.5 3.2 Q17 2.6 15.5 4 L12.5 7 L11.5 6 Z" fill="#111" />
          </svg>
        </Cursor>
      </DocArea>
    </Workspace>
  </Shell>
);

export default App;
